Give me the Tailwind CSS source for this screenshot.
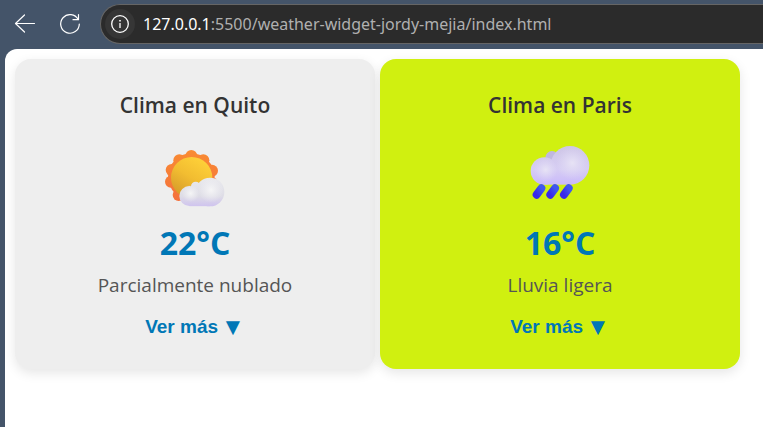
<!DOCTYPE html>
<html lang="es">
<head>
<meta charset="utf-8">
<meta name="viewport" content="width=device-width, initial-scale=1">
<title>Clima</title>
<script src="https://cdn.jsdelivr.net/npm/@tailwindcss/browser@4"></script>
</head>
<body class="flex min-h-screen flex-col overflow-x-hidden bg-[#445469] font-['Open_Sans',sans-serif]">
<header class="flex items-center pt-1 pb-[5px] pl-3">
  <button type="button" aria-label="Atrás" class="grid size-6 place-items-center text-white">
    <svg class="size-6" viewBox="0 0 24 24" fill="none" stroke="currentColor" stroke-width="1.2" stroke-linecap="round" stroke-linejoin="round"><path d="M22.5 11.5H3.5M12.5 3L3.5 11.5L12.5 20"/></svg>
  </button>
  <button type="button" aria-label="Actualizar" class="ml-[22px] grid size-6 place-items-center text-white">
    <svg class="size-6" viewBox="0 0 24 24" fill="none" stroke="currentColor" stroke-width="1.2" stroke-linecap="round" stroke-linejoin="round"><path d="M20.2 7.5A9.3 9.3 0 1 0 21.3 12M20.5 2.5V7.7H15"/></svg>
  </button>
  <div class="ml-[18px] flex h-10 min-w-0 flex-1 items-center gap-2 rounded-l-full border border-r-0 border-[#656565] bg-[#2b2b2b] pl-1">
    <button type="button" aria-label="Información del sitio" class="grid size-[30px] shrink-0 place-items-center rounded-full bg-[#363636] text-white">
      <svg class="size-5" viewBox="0 0 20 20" fill="none" stroke="currentColor" stroke-width="1.3"><circle cx="10" cy="10" r="8.3"/><path d="M10 9V14"/><path d="M10 6V7.6" stroke-width="1.6"/></svg>
    </button>
    <p class="truncate font-['Noto_Sans',sans-serif] text-base text-[#b0b0b0]"><span class="text-white">127.0.0.1</span>:5500/weather-widget-jordy-mejia/index.html</p>
  </div>
</header>
<main class="ml-[5px] flex flex-1 flex-wrap content-start items-start gap-[5px] rounded-tl-xl bg-white p-2.5">
  <section class="flex w-[360px] flex-col items-center rounded-2xl bg-[#eee] px-5 pt-8 pb-[30px] shadow-[0_4px_12px_rgba(0,0,0,0.1)]">
    <h2 class="text-[21px] leading-7 font-semibold text-[#333]">Clima en Quito</h2>
    <svg class="mt-[25px] size-16" viewBox="39 12 192 192" aria-hidden="true">
      <defs>
        <linearGradient id="rays" gradientUnits="userSpaceOnUse" x1="0" y1="30" x2="0" y2="183"><stop offset="0" stop-color="#f98b32"/><stop offset="1" stop-color="#f4703c"/></linearGradient>
        <linearGradient id="sun" x1=".75" y1=".1" x2=".25" y2=".9"><stop offset="0" stop-color="#fdcf38"/><stop offset=".5" stop-color="#f2bd31"/><stop offset="1" stop-color="#d99f2b"/></linearGradient>
        <linearGradient id="puff" gradientUnits="userSpaceOnUse" x1="0" y1="113" x2="0" y2="198"><stop offset="0" stop-color="#e9e9ed"/><stop offset=".65" stop-color="#dedde6"/><stop offset="1" stop-color="#cfc4ee"/></linearGradient>
        <radialGradient id="puffLight"><stop offset="0" stop-color="#f5f5f6"/><stop offset="1" stop-color="#f0f0f4" stop-opacity="0"/></radialGradient>
      </defs>
      <g fill="url(#rays)">
        <circle cx="124" cy="110" r="70"/>
        <circle cx="124" cy="48" r="18"/><circle cx="160" cy="61" r="18"/><circle cx="186" cy="92" r="18"/><circle cx="184" cy="128" r="18"/>
        <circle cx="88" cy="61" r="18"/><circle cx="65" cy="90" r="18"/><circle cx="63" cy="125" r="18"/><circle cx="86" cy="165" r="18"/>
      </g>
      <circle cx="125" cy="113" r="62" fill="url(#sun)"/>
      <g fill="url(#puff)">
        <circle cx="137" cy="139" r="14"/><circle cx="118" cy="168" r="30"/><circle cx="180" cy="156" r="43"/><path d="M118 140h62v58.500h-62z"/>
      </g>
      <circle cx="183" cy="150" r="38" fill="url(#puffLight)"/>
      <circle cx="122" cy="160" r="26" fill="url(#puffLight)"/>
    </svg>
    <p class="mt-[17px] text-[32px] leading-9 font-bold text-[#0077b6]">22°C</p>
    <p class="mt-2.5 text-[19px] leading-7 text-[#555]">Parcialmente nublado</p>
    <button type="button" class="mt-4 flex items-center gap-[3px] font-['Liberation_Sans','DejaVu_Sans',sans-serif] text-[19px] leading-6 font-bold text-[#0077b6]">Ver más <span class="text-2xl leading-6">▼</span></button>
  </section>
  <section class="flex w-[360px] flex-col items-center rounded-2xl bg-[#d0f010] px-5 pt-8 pb-[30px] shadow-[0_4px_12px_rgba(0,0,0,0.1)]">
    <h2 class="text-[21px] leading-7 font-semibold text-[#333]">Clima en Paris</h2>
    <svg class="mt-[25px] size-16" viewBox="39 27 192 192" aria-hidden="true">
      <defs>
        <linearGradient id="cloud" gradientUnits="userSpaceOnUse" x1="0" y1="33" x2="0" y2="149"><stop offset="0" stop-color="#cec6e6"/><stop offset=".6" stop-color="#d6cdf3"/><stop offset="1" stop-color="#c9b9fa"/></linearGradient>
        <radialGradient id="cloudLight"><stop offset="0" stop-color="#e7e3f5"/><stop offset="1" stop-color="#dfd9f4" stop-opacity="0"/></radialGradient>
        <linearGradient id="drop" x1="1" y1="0" x2="0" y2="1"><stop offset="0" stop-color="#4057ee"/><stop offset="1" stop-color="#3828eb"/></linearGradient>
      </defs>
      <circle cx="111" cy="68" r="20" fill="#c0b8df"/>
      <g fill="url(#cloud)">
        <circle cx="88" cy="108" r="41"/><circle cx="165" cy="91" r="58"/><path d="M88 85h77v64h-77z"/>
      </g>
      <circle cx="172" cy="84" r="50" fill="url(#cloudLight)"/>
      <circle cx="92" cy="104" r="36" fill="url(#cloudLight)"/>
      <g stroke="url(#drop)" stroke-width="24" stroke-linecap="round">
        <path d="M79 160L65 179"/><path d="M120 160L106 179"/><path d="M161 160L147 179"/>
      </g>
    </svg>
    <p class="mt-[17px] text-[32px] leading-9 font-bold text-[#0077b6]">16°C</p>
    <p class="mt-2.5 text-[19px] leading-7 text-[#555]">Lluvia ligera</p>
    <button type="button" class="mt-4 flex items-center gap-[3px] font-['Liberation_Sans','DejaVu_Sans',sans-serif] text-[19px] leading-6 font-bold text-[#0077b6]">Ver más <span class="text-2xl leading-6">▼</span></button>
  </section>
</main>
</body>
</html>
